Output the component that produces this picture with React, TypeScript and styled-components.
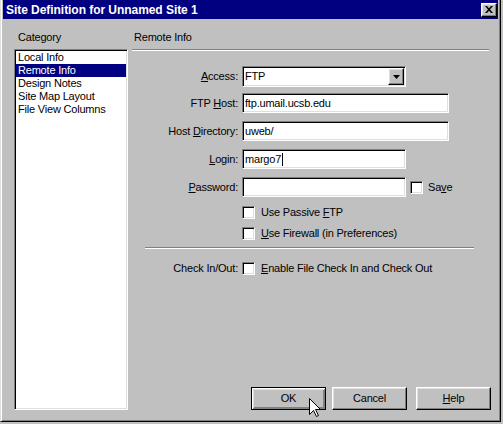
import React from "react";
import styled, { createGlobalStyle, css } from "styled-components";

const GlobalStyle = createGlobalStyle`
  html, body { margin: 0; padding: 0; background: #c0c0c0; }
  body {
    font-family: "Liberation Sans", Arial, sans-serif;
    font-size: 11px;
    letter-spacing: -0.2px;
    color: #000;
  }
  * { box-sizing: border-box; }
`;

const raised = css`
  border: 1px solid;
  border-color: #fff #000 #000 #fff;
  box-shadow: inset -1px -1px #808080, inset 1px 1px #dfdfdf;
  background: #c0c0c0;
`;

const sunken = css`
  border: 1px solid;
  border-color: #808080 #fff #fff #808080;
  box-shadow: inset 1px 1px #000, inset -1px -1px #dfdfdf;
  background: #fff;
`;

const Window = styled.div`
  position: relative;
  width: 501px;
  height: 422px;
  display: flex;
  flex-direction: column;
  background: #c0c0c0;
  border: 1px solid;
  border-top: none;
  border-color: #dfdfdf #000 #000 #dfdfdf;
  box-shadow: inset 1px 0 #fff, inset -1px -1px #808080;
  padding: 0 2px 1px 2px;
`;

const TitleBar = styled.div`
  height: 19px;
  flex: none;
  background: #000080;
  display: flex;
  align-items: center;
  justify-content: space-between;
  padding: 0 1px 0 3px;
`;

const Title = styled.span`
  color: #fff;
  font-weight: bold;
  font-size: 12px;
  letter-spacing: -0.05px;
  line-height: 14px;
`;

const CloseButton = styled.div`
  ${raised};
  width: 16px;
  height: 14px;
  display: flex;
  align-items: center;
  justify-content: center;
  padding-bottom: 1px;
`;

const Body = styled.div`
  flex: 1;
  display: grid;
  grid-template-columns: 114px 357px;
  grid-template-rows: 18px 1fr;
  column-gap: 4px;
  padding: 12px 9px 10px 11px;
`;

const SectionLabel = styled.div<{ $indent: number }>`
  line-height: 13px;
  padding-left: ${(p) => p.$indent}px;
`;

const ListBox = styled.div`
  ${sunken};
  padding: 1px;
  display: flex;
  flex-direction: column;
`;

const ListItem = styled.div<{ $selected?: boolean }>`
  height: 13px;
  line-height: 13px;
  padding-left: 2px;
  white-space: nowrap;
  background: ${(p) => (p.$selected ? "#000080" : "transparent")};
  color: ${(p) => (p.$selected ? "#fff" : "#000")};
`;

const Panel = styled.div`
  display: flex;
  flex-direction: column;
  border-top: 1px solid #808080;
  box-shadow: inset 0 1px #fff;
`;

const FieldRow = styled.div<{ $top: number }>`
  display: grid;
  grid-template-columns: 106px auto;
  column-gap: 4px;
  align-items: center;
  margin-top: ${(p) => p.$top}px;
`;

const FieldLabel = styled.span`
  text-align: right;
  line-height: 13px;
  white-space: nowrap;
`;

const Key = styled.span`
  text-decoration: underline;
  text-underline-offset: 1px;
`;

const Controls = styled.div`
  display: flex;
  align-items: center;
`;

const TextField = styled.div<{ $width: number }>`
  ${sunken};
  width: ${(p) => p.$width}px;
  height: 20px;
  padding: 0 2px;
  display: flex;
  align-items: center;
  line-height: 13px;
  white-space: nowrap;
`;

const Caret = styled.span`
  display: inline-block;
  width: 1px;
  height: 13px;
  background: #000;
  margin-left: 1px;
`;

const Select = styled.div`
  ${sunken};
  width: 164px;
  height: 21px;
  padding: 1px 1px 1px 1px;
  display: flex;
  align-items: center;
`;

const SelectValue = styled.span`
  flex: 1;
  padding-left: 1px;
  line-height: 13px;
`;

const DropButton = styled.div`
  ${raised};
  width: 16px;
  height: 17px;
  display: flex;
  align-items: center;
  justify-content: center;
`;

const CheckBox = styled.span`
  ${sunken};
  display: inline-block;
  width: 13px;
  height: 13px;
  flex: none;
`;

const CheckLabel = styled.span<{ $gap: number }>`
  margin-left: ${(p) => p.$gap}px;
  line-height: 13px;
  white-space: nowrap;
`;

const Separator = styled.div`
  margin: 7px 0 0 13px;
  width: 329px;
  height: 2px;
  border-top: 1px solid #808080;
  border-bottom: 1px solid #fff;
`;

const ButtonRow = styled.div`
  margin-top: auto;
  margin-right: -2px;
  display: flex;
  justify-content: flex-end;
`;

const PushButton = styled.div<{ $default?: boolean; $gap: number }>`
  ${raised};
  width: 75px;
  height: 23px;
  margin-left: ${(p) => p.$gap}px;
  display: flex;
  align-items: center;
  justify-content: center;
  line-height: 13px;
  ${(p) =>
    p.$default &&
    css`
      border-color: #000;
      box-shadow: inset 1px 1px #fff, inset -1px -1px #808080,
        inset 2px 2px #dfdfdf, inset -2px -2px #808080;
    `}
`;

const Pointer = styled.svg`
  position: absolute;
  left: 308px;
  top: 398px;
`;

const CloseGlyph = () => (
  <svg width="8" height="7" viewBox="0 0 8 7">
    <path d="M0 0H2L4 2.3L6 0H8L5 3.5L8 7H6L4 4.7L2 7H0L3 3.5Z" fill="#000" />
  </svg>
);

const DownArrow = () => (
  <svg width="7" height="4" viewBox="0 0 7 4">
    <path d="M0 0H7L3.5 4Z" fill="#000" />
  </svg>
);

const categories = [
  "Local Info",
  "Remote Info",
  "Design Notes",
  "Site Map Layout",
  "File View Columns",
];

export default function App() {
  return (
    <>
      <GlobalStyle />
      <Window>
        <TitleBar>
          <Title>Site Definition for Unnamed Site 1</Title>
          <CloseButton>
            <CloseGlyph />
          </CloseButton>
        </TitleBar>
        <Body>
          <SectionLabel $indent={4}>Category</SectionLabel>
          <SectionLabel $indent={2}>Remote Info</SectionLabel>
          <ListBox>
            {categories.map((c) => (
              <ListItem key={c} $selected={c === "Remote Info"}>
                {c}
              </ListItem>
            ))}
          </ListBox>
          <Panel>
            <FieldRow $top={16}>
              <FieldLabel>
                <Key>A</Key>ccess:
              </FieldLabel>
              <Controls>
                <Select>
                  <SelectValue>FTP</SelectValue>
                  <DropButton>
                    <DownArrow />
                  </DropButton>
                </Select>
              </Controls>
            </FieldRow>
            <FieldRow $top={6}>
              <FieldLabel>
                FTP <Key>H</Key>ost:
              </FieldLabel>
              <Controls>
                <TextField $width={207}>ftp.umail.ucsb.edu</TextField>
              </Controls>
            </FieldRow>
            <FieldRow $top={8}>
              <FieldLabel>
                Host <Key>D</Key>irectory:
              </FieldLabel>
              <Controls>
                <TextField $width={207}>uweb/</TextField>
              </Controls>
            </FieldRow>
            <FieldRow $top={8}>
              <FieldLabel>
                <Key>L</Key>ogin:
              </FieldLabel>
              <Controls>
                <TextField $width={164}>
                  margo7
                  <Caret />
                </TextField>
              </Controls>
            </FieldRow>
            <FieldRow $top={8}>
              <FieldLabel>
                <Key>P</Key>assword:
              </FieldLabel>
              <Controls>
                <TextField $width={164} />
                <CheckBox style={{ marginLeft: 4 }} />
                <CheckLabel $gap={5}>
                  Sa<Key>v</Key>e
                </CheckLabel>
              </Controls>
            </FieldRow>
            <FieldRow $top={9}>
              <span />
              <Controls>
                <CheckBox />
                <CheckLabel $gap={6}>
                  Use Passive <Key>F</Key>TP
                </CheckLabel>
              </Controls>
            </FieldRow>
            <FieldRow $top={8}>
              <span />
              <Controls>
                <CheckBox />
                <CheckLabel $gap={6}>
                  <Key>U</Key>se Firewall (in Preferences)
                </CheckLabel>
              </Controls>
            </FieldRow>
            <Separator />
            <FieldRow $top={13}>
              <FieldLabel>Check In/Out:</FieldLabel>
              <Controls>
                <CheckBox />
                <CheckLabel $gap={6}>
                  <Key>E</Key>nable File Check In and Check Out
                </CheckLabel>
              </Controls>
            </FieldRow>
            <ButtonRow>
              <PushButton $default $gap={0}>
                OK
              </PushButton>
              <PushButton $gap={6}>Cancel</PushButton>
              <PushButton $gap={9}>
                <Key>H</Key>elp
              </PushButton>
            </ButtonRow>
          </Panel>
        </Body>
        <Pointer width="13" height="20" viewBox="0 0 13 20">
          <path
            d="M0.5 0.5V16.5L4.5 12.5L7.5 18.5L9.5 17.5L6.5 11.5H11.5Z"
            fill="#fff"
            stroke="#000"
            strokeWidth="1"
            strokeLinejoin="miter"
          />
        </Pointer>
      </Window>
    </>
  );
}
